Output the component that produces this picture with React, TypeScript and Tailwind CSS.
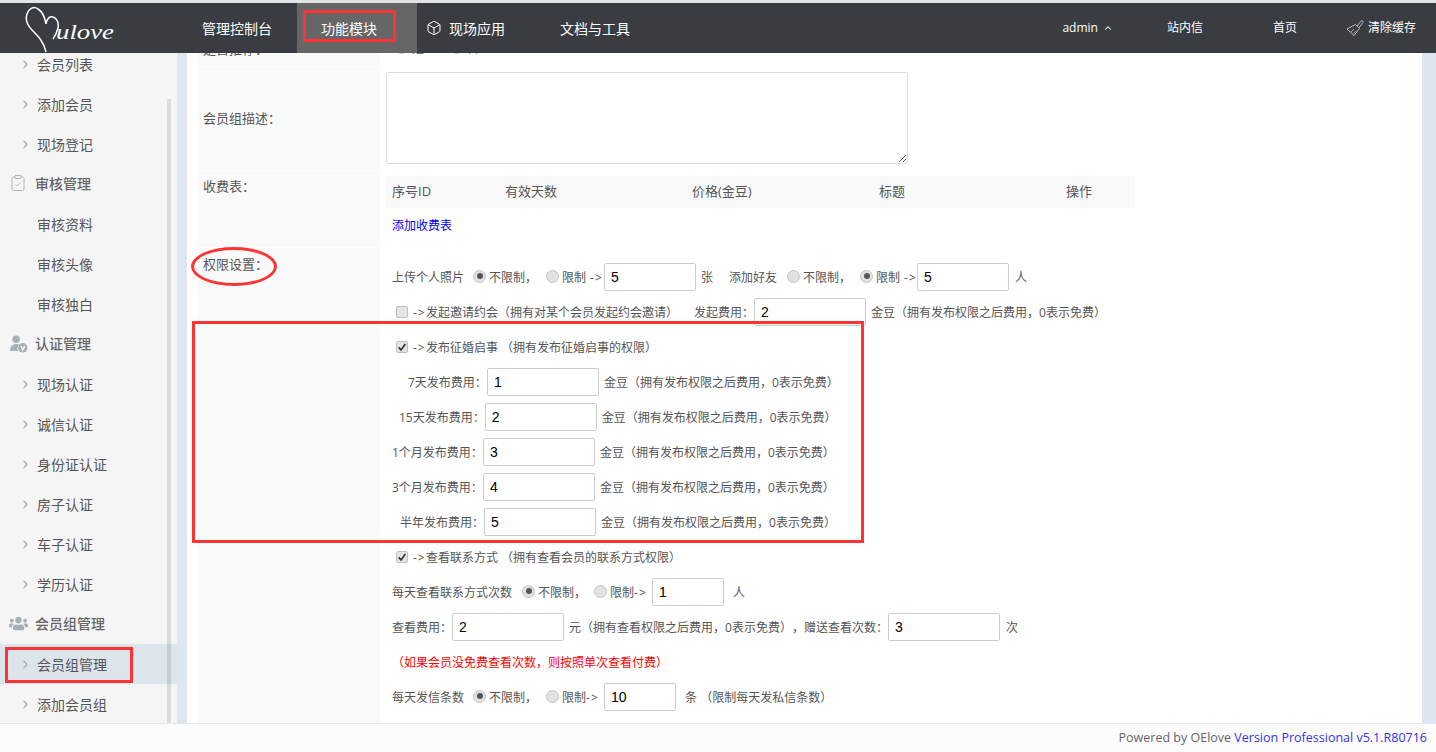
import { ReactNode } from 'react'
import { Box, ChevronRight, ClipboardCheck, ChevronUp } from 'lucide-react'
import { FaUsers } from 'react-icons/fa'

function Logo() {
	return (
		<svg viewBox="0 0 100 48" className="w-[100px] h-[48px] text-white">
			<path d="M22 46 C20 36 14 30 8 24 C3 19 1 14 3 8 C5 2 10 0 14 3 C19 6 21 12 22 18 C23 12 26 10 29 11 C33 12 35 17 34 22 C33 26 31 30 29 33" fill="none" stroke="currentColor" strokeWidth="1.5" />
			<text x="32" y="33" fontFamily="'Liberation Serif', serif" fontStyle="italic" fontSize="22" fill="currentColor" textLength="58" lengthAdjust="spacingAndGlyphs">ulove</text>
		</svg>
	)
}

function AuthIcon() {
	return (
		<svg viewBox="0 0 20 20" className="w-[19px] h-[19px] text-[#a9afb7]">
			<circle cx="7.5" cy="5.5" r="4" fill="currentColor" />
			<path d="M1 18 C1 13 4 10.5 7.5 10.5 C9 10.5 10 11 10.5 11.5 C9 13 8.5 16 9.5 18 Z" fill="currentColor" />
			<circle cx="14.5" cy="14.5" r="5" fill="currentColor" />
			<path d="M12.5 12.8 L14.5 16.6 L16.5 12.8" fill="none" stroke="#fff" strokeWidth="1.4" />
		</svg>
	)
}

function BroomIcon() {
	return (
		<svg viewBox="0 0 18 18" className="w-[18px] h-[18px] mr-[4px] text-[#b8bcbf]">
			<path d="M11 7 L15 2.2 C16 1 17.6 2.2 16.8 3.5 L12.8 9" fill="none" stroke="currentColor" strokeWidth="1" />
			<path d="M9.5 5.5 L13.5 9.5 L8 16.5 L1 10 Z" fill="none" stroke="currentColor" strokeWidth="1" />
			<path d="M5 13 L8 10 M7.5 14.5 L10 11.5" fill="none" stroke="currentColor" strokeWidth="0.8" />
		</svg>
	)
}

function MenuItem({ label, arrow = true, active = false }: { label: string; arrow?: boolean; active?: boolean }) {
	return (
		<div className={`h-[40px] flex items-center text-[14px] text-[#555] ${active ? 'bg-[#dce4ec]' : ''}`}>
			<span className="w-[37px] pl-[19px] shrink-0">
				{arrow ? <ChevronRight size={13} className="text-[#a3a8ae]" /> : null}
			</span>
			{label}
		</div>
	)
}

function MenuHead({ label, icon }: { label: string; icon: ReactNode }) {
	return (
		<div className="h-[40px] pb-[2px] flex items-center text-[14px] font-medium text-[#666]">
			<span className="w-[35px] pl-[9px] shrink-0 flex items-center text-[#a9afb7]">{icon}</span>
			{label}
		</div>
	)
}

function Radio({ checked = false, className = '' }: { checked?: boolean; className?: string }) {
	return (
		<span className={`w-[13px] h-[13px] -mt-[3px] shrink-0 rounded-full border border-[#c4c4c4] bg-[#e2e2e2] flex items-center justify-center ${className}`}>
			{checked ? <span className="w-[6px] h-[6px] rounded-full bg-[#555]"></span> : null}
		</span>
	)
}

function Check({ checked = false }: { checked?: boolean }) {
	return (
		<span className="w-[12px] h-[12px] -mt-[2px] ml-[4px] mr-[5px] shrink-0 rounded-[2px] border border-[#c0c0c0] bg-[#e4e4e4] flex items-center justify-center">
			{checked ? (
				<svg viewBox="0 0 12 12" className="w-[10px] h-[10px]">
					<path d="M2 6.5 L4.8 9.5 L10 2.5" fill="none" stroke="#333" strokeWidth="2" />
				</svg>
			) : null}
		</span>
	)
}

function Arrow() {
	return <span className="w-[13px] shrink-0 tracking-[1px]">-&gt;</span>
}

function Inp({ value, w, className = '' }: { value: string; w: string; className?: string }) {
	return (
		<input
			defaultValue={value}
			className={`${w} h-[28px] mb-[1px] shrink-0 border border-[#ccc] rounded-[2px] pl-[6px] font-['Liberation_Sans',sans-serif] text-[14px] text-black bg-white outline-none ${className}`}
		/>
	)
}

function Row({ children }: { children: ReactNode }) {
	return <div className="h-[35px] flex items-center whitespace-nowrap">{children}</div>
}

const feeNote = '金豆（拥有发布权限之后费用，0表示免费）'

function FeeRow({ label, value, start }: { label: string; value: string; start: string }) {
	return (
		<Row>
			<span className={start}>{label}</span>
			<Inp value={value} w="w-[112px]" />
			<span className="ml-[5px]">{feeNote}</span>
		</Row>
	)
}

export default function App() {
	return (
		<div className="relative h-[752px] flex flex-col overflow-hidden bg-white text-[12px] text-[#555] [text-spacing-trim:space-all] font-['Open_Sans','Noto_Sans_CJK_SC',sans-serif]">
			<div className="h-[3px] bg-[#e4e4e4] shrink-0"></div>

			<header className="h-[50px] shrink-0 bg-[#393d41] flex items-center text-white text-[14px]">
				<div className="w-[178px] pl-[24px] self-start pt-[3px] shrink-0"><Logo /></div>
				<a className="w-[119px] pl-[24px]">管理控制台</a>
				<a className="w-[120px] h-full pl-[24px] bg-[#666] flex items-center">功能模块</a>
				<a className="flex items-center ml-[9px]"><Box size={16} strokeWidth={1.5} className="mr-[7px]" />现场应用</a>
				<a className="ml-[55px]">文档与工具</a>
				<div className="ml-auto flex items-center text-[12px]">
					<a className="flex items-center">admin<ChevronUp size={10} strokeWidth={2.5} className="ml-[5px]" /></a>
					<a className="ml-[54px]">站内信</a>
					<a className="ml-[70px]">首页</a>
					<a className="ml-[49px] mr-[20px] flex items-center"><BroomIcon />清除缓存</a>
				</div>
			</header>

			<div className="flex-1 flex min-h-0">
				<aside className="w-[177px] shrink-0 bg-[#f5f5f5] overflow-hidden">
					<div className="-mt-[9px]">
						<MenuItem label="会员列表" />
						<MenuItem label="添加会员" />
						<MenuItem label="现场登记" />
						<MenuHead label="审核管理" icon={<ClipboardCheck size={18} strokeWidth={1.2} />} />
						<MenuItem label="审核资料" arrow={false} />
						<MenuItem label="审核头像" arrow={false} />
						<MenuItem label="审核独白" arrow={false} />
						<MenuHead label="认证管理" icon={<AuthIcon />} />
						<MenuItem label="现场认证" />
						<MenuItem label="诚信认证" />
						<MenuItem label="身份证认证" />
						<MenuItem label="房子认证" />
						<MenuItem label="车子认证" />
						<MenuItem label="学历认证" />
						<MenuHead label="会员组管理" icon={<FaUsers size={19} />} />
						<MenuItem label="会员组管理" active />
						<MenuItem label="添加会员组" />
					</div>
				</aside>
				<div className="w-[10px] shrink-0 bg-[#dee6ef]"></div>

				<main className="flex-1 min-w-0 overflow-hidden pl-[11px] flex flex-col">
					<div className="h-[40px] -mt-[27px] flex shrink-0 mb-[1px]">
						<div className="w-[182px] bg-[#fafafa] pl-[5px] pt-[14px] text-[13px]">是否推荐：</div>
						<div className="flex-1 flex items-center pl-[15px] pt-[6px]">
							<Radio /><span className="ml-[4px]">是</span><Radio className="ml-[26px]" /><span className="ml-[4px]">否</span>
						</div>
					</div>

					<div className="h-[103px] flex shrink-0 mb-[1px]">
						<div className="w-[182px] bg-[#fafafa] pl-[5px] flex items-center text-[13px]">会员组描述：</div>
						<div className="flex-1 pl-[6px] pt-[5px]">
							<textarea className="block w-[522px] h-[92px] border border-[#ddd] rounded-[2px] outline-none"></textarea>
						</div>
					</div>

					<div className="h-[76px] flex shrink-0 mb-[1px]">
						<div className="w-[182px] bg-[#fafafa] pl-[5px] pt-[6px] text-[13px]">收费表：</div>
						<div className="flex-1 pl-[6px] pt-[5px]">
							<div className="w-[749px] h-[32px] bg-[#f9f9f9] grid grid-cols-[113px_187px_187px_187px_75px] items-center text-[13px]">
								<span className="pl-[6px]">序号ID</span>
								<span className="pl-[6px]">有效天数</span>
								<span className="pl-[6px]">价格(金豆)</span>
								<span className="pl-[6px]">标题</span>
								<span className="pl-[6px]">操作</span>
							</div>
							<a className="block mt-[9px] ml-[6px] text-[#0000ee]">添加收费表</a>
						</div>
					</div>

					<div className="flex-1 flex min-h-0">
						<div className="w-[182px] bg-[#fafafa] pl-[5px] pt-[7px] text-[13px]">权限设置：</div>
						<div className="flex-1 pl-[12px] pt-[12px]">
							<Row>
								上传个人照片
								<Radio checked className="ml-[9px]" /><span className="ml-[3px]">不限制，</span>
								<Radio className="ml-[9px]" /><span className="ml-[3px] mr-[4px]">限制</span><Arrow />
								<Inp value="5" w="w-[92px]" className="ml-[1px]" />
								<span className="ml-[5px]">张</span>
								<span className="ml-[16px]">添加好友</span>
								<Radio className="ml-[10px]" /><span className="ml-[3px]">不限制，</span>
								<Radio checked className="ml-[9px]" /><span className="ml-[3px] mr-[4px]">限制</span><Arrow />
								<Inp value="5" w="w-[92px]" />
								<span className="ml-[6px]">人</span>
							</Row>
							<Row>
								<Check /><Arrow />发起邀请约会（拥有对某个会员发起约会邀请）
								<span className="ml-[16px]">发起费用：</span>
								<Inp value="2" w="w-[112px]" />
								<span className="ml-[5px]">{feeNote}</span>
							</Row>
							<Row>
								<Check checked /><Arrow /><span className="whitespace-pre">发布征婚启事 （拥有发布征婚启事的权限）</span>
							</Row>
							<FeeRow label="7天发布费用：" value="1" start="ml-[16px]" />
							<FeeRow label="15天发布费用：" value="2" start="ml-[7px]" />
							<FeeRow label="1个月发布费用：" value="3" start="" />
							<FeeRow label="3个月发布费用：" value="4" start="" />
							<FeeRow label="半年发布费用：" value="5" start="ml-[8px]" />
							<Row>
								<Check checked /><Arrow /><span className="whitespace-pre">查看联系方式 （拥有查看会员的联系方式权限）</span>
							</Row>
							<Row>
								每天查看联系方式次数
								<Radio checked className="ml-[10px]" /><span className="ml-[3px]">不限制，</span>
								<Radio className="ml-[8px]" /><span className="ml-[3px]">限制</span><Arrow />
								<Inp value="1" w="w-[72px]" className="ml-[5px]" />
								<span className="ml-[9px]">人</span>
							</Row>
							<Row>
								查看费用：
								<Inp value="2" w="w-[112px]" />
								<span className="ml-[5px]">元（拥有查看权限之后费用，0表示免费），赠送查看次数：</span>
								<Inp value="3" w="w-[112px]" />
								<span className="ml-[6px]">次</span>
							</Row>
							<Row><span className="text-[#ff0000]">（如果会员没免费查看次数，则按照单次查看付费）</span></Row>
							<Row>
								每天发信条数
								<Radio checked className="ml-[9px]" /><span className="ml-[3px]">不限制，</span>
								<Radio className="ml-[9px]" /><span className="ml-[3px]">限制</span><Arrow />
								<Inp value="10" w="w-[72px]" className="ml-[5px]" />
								<span className="ml-[9px] whitespace-pre">条 （限制每天发私信条数）</span>
							</Row>
						</div>
					</div>
				</main>
				<div className="w-[14px] shrink-0 bg-[#dee6ef]"></div>
			</div>

			<footer className="h-[29px] pt-[1px] shrink-0 border-t border-[#e7e7e7] bg-[#fcfcfc] flex items-center justify-end pr-[9px] text-[12.5px] text-[#666]">
				Powered by OElove&nbsp;<span className="text-[#3333ee]">Version Professional v5.1.R80716</span>
			</footer>

			{/* scrollbar and the red marks drawn over the screenshot */}
			<div className="absolute left-[167px] top-[99px] w-[4px] h-[624px] bg-black/10"></div>
			<div className="absolute left-[303px] top-[10px] w-[93px] h-[32px] border-[3px] border-[#ff3333]"></div>
			<div className="absolute left-[5px] top-[647px] w-[128px] h-[36px] border-[3px] border-[#ff3333]"></div>
			<div className="absolute left-[192px] top-[321px] w-[672px] h-[222px] border-[3px] border-[#ff3333]"></div>
			<div className="absolute left-[191px] top-[247px] w-[86px] h-[39px] rounded-[50%] border-[3px] border-[#ff3333]"></div>
		</div>
	)
}
